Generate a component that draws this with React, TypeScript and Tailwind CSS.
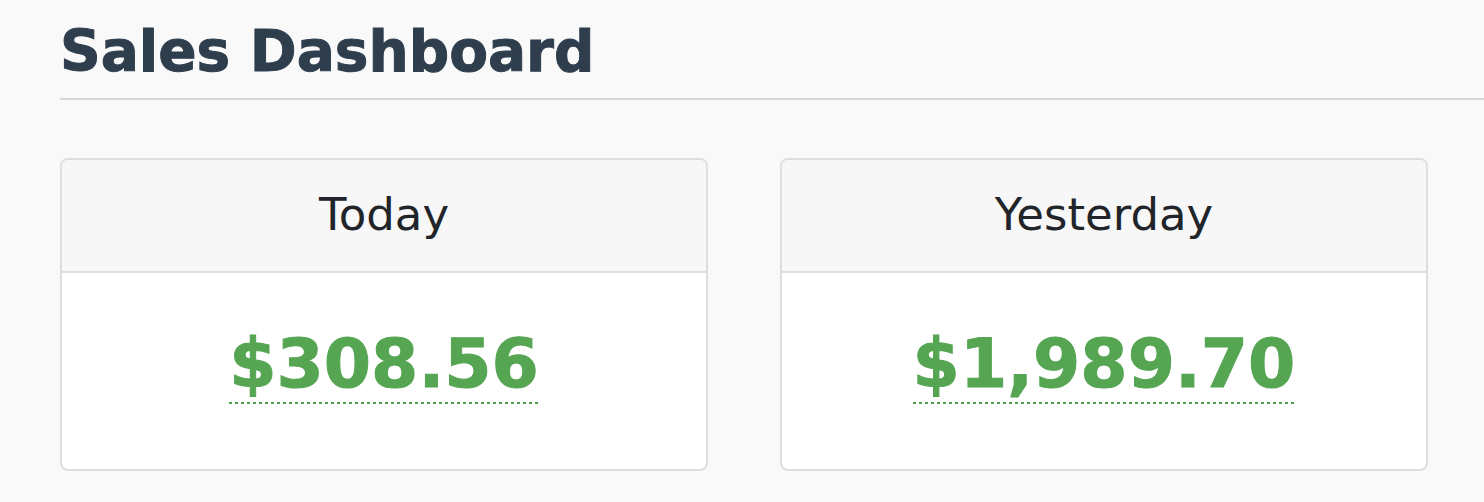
import React from 'react';

const stats = [
  { label: 'Today', amount: '$308.56' },
  { label: 'Yesterday', amount: '$1,989.70' },
];

const App: React.FC = () => {
  return (
    <div className="min-h-screen w-full bg-[#f9f9f9] pl-[60px] pt-[24px] font-['DejaVu_Sans',sans-serif]">
      {/* Page title */}
      <h1 className="text-[56.5px] font-bold leading-none text-[#2f3e4d] [-webkit-text-stroke:1px_#2f3e4d]">
        Sales Dashboard
      </h1>
      <div className="mt-[17px] h-[2px] w-full bg-[#d6d6d3]" />

      {/* Stat cards */}
      <div className="mt-[58px] flex gap-[72px]">
        {stats.map((s) => (
          <div
            key={s.label}
            className="w-[648px] overflow-hidden rounded-[8px] border-2 border-[#dedede] bg-white"
          >
            <div className="flex h-[113px] items-center justify-center border-b-2 border-[#dedede] bg-[#f7f7f7] pb-[1px]">
              <span className="text-[45px] leading-none text-[#212529]">{s.label}</span>
            </div>
            <div className="h-[196px] pt-[57px] text-center">
              <span className="inline-flex flex-col">
                <span className="text-[68px] font-bold leading-none text-[#55a553] [-webkit-text-stroke:1px_#55a553]">
                  {s.amount}
                </span>
                {/* dotted underline */}
                <svg className="mt-[4px] block h-[2px] w-full" preserveAspectRatio="none">
                  <line
                    x1="0"
                    y1="1"
                    x2="100%"
                    y2="1"
                    stroke="#4f9f4f"
                    strokeWidth="2"
                    strokeDasharray="3 3"
                    shapeRendering="crispEdges"
                  />
                </svg>
              </span>
            </div>
          </div>
        ))}
      </div>
    </div>
  );
};

export default App;
